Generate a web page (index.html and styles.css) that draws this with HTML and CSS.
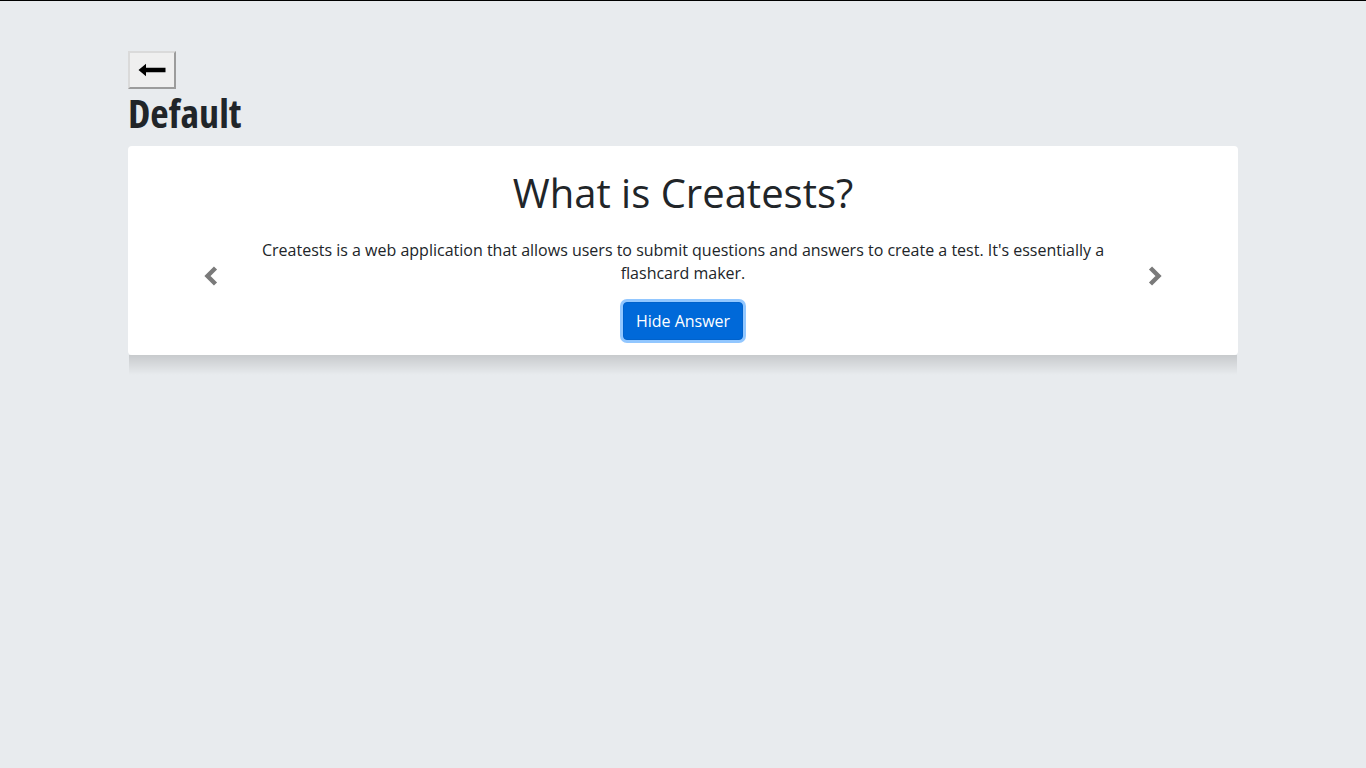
FILE: index.html
```html
<!DOCTYPE html>
<html lang="en">
<head>
<meta charset="utf-8">
<title>Creatests - Default</title>
<link rel="stylesheet" href="styles.css">
</head>
<body>
<div class="topline"></div>
<main class="container">
  <button class="back-btn" type="button" aria-label="Back">
    <svg width="28" height="14" viewBox="0 0 28 14" aria-hidden="true">
      <path d="M0.5 7 L8 0.8 L8 4.8 L27.5 4.8 L27.5 9.2 L8 9.2 L8 13.2 Z" fill="#000"/>
    </svg>
  </button>
  <h1 class="deck-title">Default</h1>
  <section class="card">
    <h2 class="question">What is Creatests?</h2>
    <div class="slide-row">
      <button class="ctrl" type="button" aria-label="Previous">
        <svg width="22" height="22" viewBox="0 0 22 22" aria-hidden="true">
          <polyline points="15.5,3 7.5,11 15.5,19" fill="none" stroke="#7a7a7a" stroke-width="4.4"/>
        </svg>
      </button>
      <div class="slide">
        <p class="answer">Creatests is a web application that allows users to submit questions and answers to create a test. It's essentially a flashcard maker.</p>
        <button class="btn-primary" type="button">Hide Answer</button>
      </div>
      <button class="ctrl" type="button" aria-label="Next">
        <svg width="22" height="22" viewBox="0 0 22 22" aria-hidden="true">
          <polyline points="6.5,3 14.5,11 6.5,19" fill="none" stroke="#7a7a7a" stroke-width="4.4"/>
        </svg>
      </button>
    </div>
  </section>
  <div class="card-shade"></div>
</main>
</body>
</html>
```
FILE: styles.css
```css
html, body {
  margin: 0;
  padding: 0;
}
body {
  background: #e8ebee;
  font-family: "Open Sans", "Liberation Sans", sans-serif;
  color: #212529;
  min-height: 768px;
}
.topline {
  height: 1px;
  background: #000;
}
.container {
  width: 1110px;
  margin: 0 auto;
  padding-top: 50px;
}
.back-btn {
  display: flex;
  align-items: center;
  justify-content: center;
  width: 48px;
  height: 38px;
  padding: 0;
  background: #efefef;
  border-style: solid;
  border-width: 2px;
  border-color: #dadada #9c9c9c #9c9c9c #dadada;
  cursor: pointer;
}
.deck-title {
  margin: 0 0 9px;
  font-family: "Open Sans", "Liberation Sans Narrow", sans-serif;
  font-stretch: 75%;
  font-weight: 700;
  font-size: 40px;
  line-height: 48px;
  color: #212529;
}
.card {
  background: #fff;
  border-radius: 4px;
  padding: 23px 58px 15px;
}
.card-shade {
  height: 20px;
  margin: 0 1px;
  background: linear-gradient(to bottom, rgba(0,0,0,0.14), rgba(0,0,0,0));
}
.question {
  margin: 0;
  text-align: center;
  font-weight: 400;
  font-size: 40px;
  line-height: 48px;
  color: #212529;
}
.slide-row {
  display: flex;
  align-items: center;
}
.ctrl {
  flex: 0 0 50px;
  display: flex;
  justify-content: center;
  align-items: center;
  background: none;
  border: 0;
  padding: 0;
  height: 40px;
  margin-bottom: 6px;
  cursor: pointer;
}
.slide {
  flex: 1;
  display: flex;
  flex-direction: column;
  align-items: center;
  padding-top: 22px;
}
.answer {
  margin: 0 0 17px;
  text-align: center;
  font-size: 16px;
  line-height: 23px;
}
.btn-primary {
  font-family: "Open Sans", "Liberation Sans", sans-serif;
  font-size: 16px;
  line-height: 24px;
  padding: 6px 12px;
  color: #fff;
  background: #0069d9;
  border: 1px solid #0062cc;
  border-radius: 4px;
  box-shadow: 0 0 0 3px rgba(38, 143, 255, 0.5);
  cursor: pointer;
}
```
